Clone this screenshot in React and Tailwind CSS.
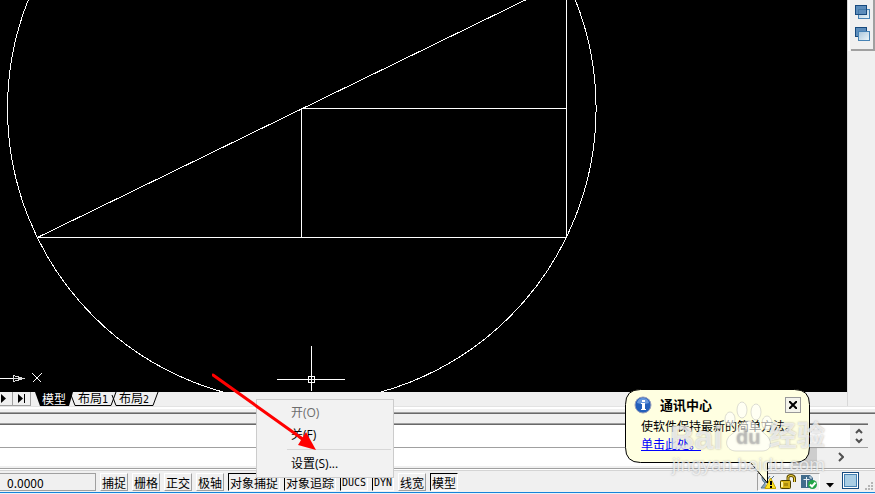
const cjk = 'font-["Noto_Sans_CJK_SC",sans-serif]';

function Drawing() {
  return (
    <svg viewBox="0 0 847 392" preserveAspectRatio="xMinYMax slice" className="block h-full w-full bg-black" fill="none" stroke="#fff" shapeRendering="crispEdges">
      <circle cx="301.8" cy="108.5" r="294.3" />
      <path d="M37.5 237.5H566.5V-20L37.5 237.5M301.5 237V108.5H566.5" />
      <path d="M0 378.5H13" />
      <path d="M13.5 375.5L23.5 378.5L13.5 381.5ZM13 378.5H23" stroke="#ddd" />
      <path d="M32.5 373.5L41.5 382.5M41.5 373.5L32.5 382.5" />
      <path d="M311.5 346V391M277 379.5H345" />
      <rect x="308.5" y="376.5" width="6" height="6" />
    </svg>
  );
}

function OrderIcon({ front }) {
  return (
    <svg width="16" height="16" viewBox="0 0 16 16" aria-hidden="true">
      <defs>
        <linearGradient id="pale" x1="0" y1="0" x2="1" y2="1">
          <stop offset="0" stopColor="#a9c5da" />
          <stop offset="1" stopColor="#eef8fa" />
        </linearGradient>
      </defs>
      {!front && <rect x="0.5" y="1.5" width="11" height="9" fill="#5d8dbb" stroke="#174a7e" />}
      <rect x="3.5" y="5.5" width="11" height="9" fill="url(#pale)" stroke="#4682b4" />
      {front && <rect x="0.5" y="1.5" width="11" height="9" fill="#5d8dbb" stroke="#174a7e" />}
      {front && <path d="M3.5 10V5.500H11" fill="none" stroke="#477ba9" />}
    </svg>
  );
}

function SideBar() {
  return (
    <aside className="w-7 shrink-0 border-l border-[#d8d8d8] bg-[#f0f0f0]">
      <div className="border-l-2 border-white pl-px">
        <div className="flex h-[51px] flex-col items-start gap-1.5 border-r-2 border-b-2 border-[#a0a0a0] bg-[#f0f0f0] pt-1 pl-1">
          <button aria-label="前置"><OrderIcon front /></button>
          <button aria-label="后置"><OrderIcon /></button>
        </div>
      </div>
    </aside>
  );
}

function LayoutTabs() {
  return (
    <nav className={`flex h-3.5 bg-[#f0f0f0] ${cjk} text-xs leading-3`}>
      <button aria-label="下一个" className="flex h-3.5 w-[13px] items-center border-r border-b border-[#a0a0a0]">
        <svg width="8" height="9"><path d="M1 0L6 4.5L1 9Z" /></svg>
      </button>
      <button aria-label="最后" className="flex h-3.5 w-[18px] items-center justify-center border-r border-b border-[#a0a0a0]">
        <svg width="8" height="9"><path d="M0 0L5 4.5L0 9ZM6 0H7V9H6Z" /></svg>
      </button>
      <div className="relative ml-1 flex h-3.5">
        <svg width="124" height="14" className="absolute inset-0" aria-hidden="true">
          <path d="M0 0L5 14H34L38 0Z" />
          <path d="M36 3L40 13.500H76L81 0M77 3L81 13.500H118L123 0" fill="none" stroke="#000" />
        </svg>
        <button className="relative w-[38px] pl-[7px] text-left text-white">模型</button>
        <button className="relative w-[41px] pl-[5px] text-left">
          布局<span className='font-["DejaVu_Sans_Mono",monospace] text-[10px]'>1</span>
        </button>
        <button className="relative w-[44px] pl-[5px] text-left">
          布局<span className='font-["DejaVu_Sans_Mono",monospace] text-[10px]'>2</span>
        </button>
      </div>
    </nav>
  );
}

function CommandArea() {
  return (
    <section className="shrink-0 bg-[#f0f0f0]">
      <div className="h-px bg-[#e3e3e3]" />
      <div className="mb-[3px] h-[2px] bg-white" />
      <div className="h-px bg-[#a0a0a0]" />
      <div className="h-px bg-[#696969]" />
      <div className="h-[9px]" />
      <div className="mr-[7px] border-t border-[#a0a0a0]">
        <div className="flex h-6 border-t border-b border-t-[#696969] border-b-[#a0a0a0] bg-white">
          <input aria-label="命令" className="min-w-0 flex-1 bg-white outline-none" />
          <div className="flex w-[18px] flex-col items-center justify-between bg-[#f0f0f0] py-[3px]">
            <button aria-label="上"><svg width="8" height="6" className="block" fill="none" stroke="#505050" strokeWidth="2"><path d="M1 5L4 2L7 5" /></svg></button>
            <button aria-label="下"><svg width="8" height="6" className="block" fill="none" stroke="#505050" strokeWidth="2"><path d="M1 1L4 4L7 1" /></svg></button>
          </div>
        </div>
      </div>
      <div className="mr-[25px] flex h-[18px] bg-white">
        <div className="flex-1" />
        <div className="w-6 bg-[#cdcdcd]" />
        <button aria-label="右" className="flex w-[33px] items-center justify-end bg-[#f0f0f0] pr-1.5">
          <svg width="6" height="10" fill="none" stroke="#505050" strokeWidth="2"><path d="M1 1L5 5L1 9" /></svg>
        </button>
      </div>
      <div className="h-[2px] bg-[#f0f0f0]" />
      <div className="h-px bg-[#a0a0a0]" />
      <div className="h-px bg-white" />
      <div className="h-px bg-[#d4d4d4]" />
    </section>
  );
}

const raised = "border-t-white border-l-white border-r-[#a0a0a0] border-b-[#a0a0a0]";
const sunken = "border-t-black border-l-black border-r-white border-b-white";
const modes = [
  ["捕捉", "w-7", raised], ["栅格", "w-7", raised], ["正交", "w-7", raised], ["极轴", "w-7", raised],
  ["对象捕捉", "w-[52px]", sunken], ["对象追踪", "w-[52px]", sunken],
  ["DUCS", "w-7", sunken], ["DYN", "w-[22px]", sunken],
  ["线宽", "w-7", raised], ["模型", "w-7", sunken],
];

function StatusBar() {
  return (
    <footer className={`flex h-[21px] shrink-0 items-center bg-[#f0f0f0] ${cjk} text-xs leading-[18px]`}>
      <output className="h-[18px] w-24 border border-l-0 border-[#a0a0a0] pl-[7px]">0.0000</output>
      <div className="ml-1 flex gap-1">
        {modes.map(([name, width, edge]) => (
          <button key={name} className={`flex h-[18px] items-center justify-center whitespace-nowrap border pt-0.5 ${width} ${edge} ${name[0] === "D" ? 'font-["DejaVu_Sans_Mono",monospace] text-[10px]' : ""}`}>{name}</button>
        ))}
      </div>
      <div className="flex-1" />
      <div className="flex h-[18px] w-[63px] items-center justify-around border border-[#a0a0a0] border-r-white border-b-white">
        <CommIcon /><LockIcon /><PlotIcon />
      </div>
      <button aria-label="状态栏菜单" className="ml-1.5 pt-2"><svg width="8" height="5" className="block"><path d="M0 0H8L4 4.500Z" /></svg></button>
      <button aria-label="全屏显示" className="ml-2 pb-0.5">
        <svg width="17" height="17" className="block">
          <rect x="0.5" y="0.5" width="16" height="16" fill="#fff" stroke="#174a7e" />
          <rect x="2.5" y="2.500" width="12" height="12" fill="#a9cde4" stroke="#4682b4" />
        </svg>
      </button>
      <svg width="10" height="10" className="mt-2.5 ml-1.5" fill="#b5b5b5" aria-hidden="true">
        <path d="M6 0h2v2h-2zM3 3h2v2h-2zM6 3h2v2h-2zM0 6h2v2h-2zM3 6h2v2h-2zM6 6h2v2h-2z" />
      </svg>
    </footer>
  );
}

function CommIcon() {
  return (
    <svg width="16" height="16" viewBox="0 0 16 16" aria-label="通讯中心" role="img">
      <path d="M2 3C2 8 5 10 9 8L3 3M5 9L1 14H8M10 2L7 6M11 5L14 2" fill="#8ba6bc" stroke="#52738d" />
      <path d="M10.500 4L16 14.500H5Z" fill="#ffe322" stroke="#c7a500" />
      <path d="M10 7h2v4h-2zM10 12h2v2h-2z" />
    </svg>
  );
}
function LockIcon() {
  return (
    <svg width="16" height="16" viewBox="0 0 16 16" aria-label="锁定" role="img">
      <path d="M8 7V3.500Q8 1.500 11 1.500T14.500 4V8" fill="none" stroke="#5e4b00" strokeWidth="3" />
      <path d="M8 7V3.500Q8 1.500 11 1.500T14.500 4V8" fill="none" stroke="#f2d648" />
      <rect x="0.500" y="6.500" width="10" height="8" rx="1" fill="#d8b51b" stroke="#4c4000" />
      <path d="M2 8v5" stroke="#fff3a0" strokeWidth="2" /><path d="M5 9v3M7 9v3" stroke="#806500" />
    </svg>
  );
}
function PlotIcon() {
  return (
    <svg width="16" height="16" viewBox="0 0 16 16" aria-label="打印" role="img">
      <path d="M0 1H9L12 4V14H0Z" fill="#416c8c" />
      <path d="M5.500 13V3M2.500 5.500H8.500M8.500 7V13M9 2V4H11" fill="none" stroke="#e2edf4" />
      <circle cx="11.500" cy="10.500" r="4.500" fill="#22a447" />
      <path d="M9 10.500L11 12.500L14.500 8.500" fill="none" stroke="#fff" strokeWidth="2" />
    </svg>
  );
}

function ContextMenu() {
  return (
    <div role="menu" className='absolute bottom-4 left-64 flex h-[79px] w-[138px] flex-col border border-[#ccc] bg-[#f2f2f2] pt-[3px] font-["Open_Sans","Noto_Sans_CJK_SC",sans-serif] text-xs'>
      <button role="menuitem" disabled className="h-5 pl-[34px] text-left text-[#6d6d6d]">开(O)</button>
      <button role="menuitem" className="mt-0.5 h-5 pl-[34px] text-left">关(F)</button>
      <hr className="mt-1 ml-[30px] mr-0.5 border-[#d7d7d7]" />
      <button role="menuitem" className="mt-1 h-5 pl-[34px] text-left">设置(S)...</button>
    </div>
  );
}

function RedArrow() {
  return (
    <svg width="104" height="78" className="absolute bottom-[43px] left-[212px]" aria-hidden="true">
      <path d="M1 2L92 67" stroke="#f00" strokeWidth="3" strokeLinecap="round" />
      <path d="M104 77L86 72L94 59Z" fill="#f00" />
    </svg>
  );
}

function Balloon() {
  return (
    <div role="dialog" aria-label="通讯中心" className={`absolute right-[65px] bottom-[31px] h-[74px] w-[185px] ${cjk} text-xs`}>
      <svg width="185" height="96" className="absolute top-0 left-0" aria-hidden="true">
        <path d="M15.500 .5H169.500Q184.500 .5 184.500 15.500V58.500Q184.500 73.500 169.500 73.500H142.500V94L125.500 73.500H15.500Q.5 73.500 .5 58.500V15.500Q.5 .5 15.500 .5Z" fill="#ffffe1" stroke="#000" />
      </svg>
      <div className="relative flex h-full flex-col px-4 pt-[7px]">
        <div className="-mx-[7px] flex items-center">
          <svg width="18" height="18" aria-hidden="true">
            <circle cx="9" cy="9" r="8" fill="#235fbb" stroke="#999fbb" />
            <path d="M3 7Q4 2 9 2T15 7Q9 9 3 7" fill="#6797dc" />
            <path d="M8 4h3v2h-3zM7 7h4v6h1v1H7v-1h1V8H7z" fill="#fff" />
          </svg>
          <h2 className="ml-2 flex-1 text-[13px] leading-4 font-bold">通讯中心</h2>
          <button aria-label="关闭" className="flex h-4 w-4 items-center justify-center border border-[#999] bg-[#f4f4ec]">
            <svg width="8" height="8"><path d="M0 0L8 8M8 0L0 8" stroke="#000" strokeWidth="2" /></svg>
          </button>
        </div>
        <p className="mt-[3px] whitespace-nowrap leading-[18px]">使软件保持最新的简单方法。</p>
        <a href="#help" className="self-start leading-[18px] text-[#00f] underline">单击此处。</a>
      </div>
    </div>
  );
}

function Watermark() {
  return (
    <div aria-hidden="true" className='pointer-events-none absolute right-[43px] bottom-[19px] h-[74px] w-[162px] font-["Liberation_Sans","Noto_Sans_CJK_SC",sans-serif] text-white/70 [text-shadow:0_0_2px_rgb(120_120_120/0.6)]'>
      <svg width="162" height="74" className="absolute inset-0" fill="#fff" fillOpacity="0.6" stroke="#aaa" strokeOpacity="0.4">
        <ellipse cx="60" cy="18" rx="5" ry="7" /><ellipse cx="72" cy="9" rx="5" ry="8" />
        <ellipse cx="86" cy="11" rx="5" ry="8" /><ellipse cx="97" cy="22" rx="5" ry="7" />
        <path d="M78 20C70 20 70 28 62 33C53 39 56 50 66 50H92C102 50 103 40 96 34C88 28 88 20 78 20Z" />
      </svg>
      <div className="absolute top-4 left-0 flex items-center leading-10 font-bold">
        <span className="w-[66px] text-[34px]">Bai</span>
        <span className="w-[33px] text-xl text-[#bbb]/50">du</span>
        <span className="text-[28px] whitespace-nowrap">经验</span>
      </div>
      <div className="absolute bottom-0 left-0.5 text-[19px] leading-5">jingyan.baidu.com</div>
    </div>
  );
}

export default function App() {
  return (
    <main className="relative flex h-screen min-h-[300px] flex-col overflow-hidden bg-[#f0f0f0] text-black">
      <div className="flex min-h-0 flex-1">
        <div className="flex min-w-0 flex-1 flex-col">
          <div className="min-h-0 flex-1"><Drawing /></div>
          <LayoutTabs />
        </div>
        <SideBar />
      </div>
      <CommandArea />
      <StatusBar />
      <div className="h-px shrink-0 bg-[#1683d8]" />
      <div className="h-px shrink-0 bg-[#e9f2f8]" />
      <ContextMenu />
      <RedArrow />
      <Balloon />
      <Watermark />
    </main>
  );
}
